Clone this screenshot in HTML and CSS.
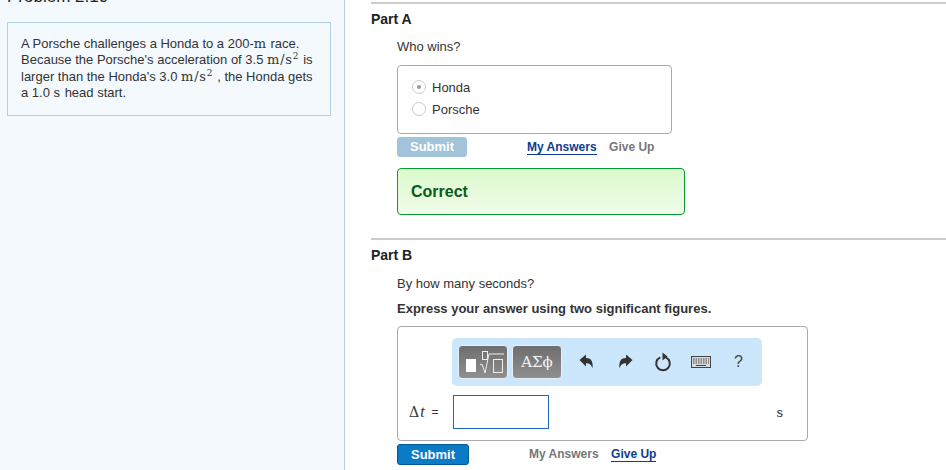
FILE: index.html
```html
<!DOCTYPE html>
<html lang="en">
<head>
<meta charset="utf-8">
<title>Problem 2.10</title>
<link rel="stylesheet" href="styles.css">
</head>
<body>
<div class="page">
  <aside class="sidebar">
    <h1 class="title">Problem 2.10</h1>
    <div class="problem">
      A Porsche challenges a Honda to a 200-<span class="m">m</span> race. Because the Porsche's acceleration of 3.5 <span class="m">m/s<sup>2</sup></span> is larger than the Honda's 3.0 <span class="m">m/s<sup>2</sup></span> , the Honda gets a 1.0 <span class="m">s</span> head start.
    </div>
  </aside>
  <main class="content">
    <section class="part part-a">
      <h2 class="part-title">Part A</h2>
      <div class="part-body">
        <p class="question">Who wins?</p>
        <div class="choices">
          <div class="choice"><span class="radio selected"></span>Honda</div>
          <div class="choice"><span class="radio"></span>Porsche</div>
        </div>
        <div class="actions actions-a">
          <button class="submit disabled">Submit</button>
          <div class="links">
            <a class="link active">My Answers</a>
            <a class="link">Give Up</a>
          </div>
        </div>
        <div class="correct">Correct</div>
      </div>
    </section>
    <section class="part part-b">
      <h2 class="part-title">Part B</h2>
      <div class="part-body">
        <p class="question">By how many seconds?</p>
        <p class="instruction">Express your answer using two significant figures.</p>
        <div class="answer-box">
          <div class="toolbar">
            <span class="tool-btn tool-templates">
              <svg width="44" height="28" viewBox="0 0 44 28">
                <rect x="5" y="11" width="10" height="13" fill="#fff"/>
                <rect x="21.500" y="3.500" width="5" height="8" fill="none" stroke="#eee"/>
                <path d="M19 17l2-1 3 9 4-19h15" fill="none" stroke="#eee"/>
                <rect x="32.500" y="11.500" width="9" height="13" fill="none" stroke="#eee"/>
              </svg>
            </span>
            <span class="tool-btn tool-symbols">ΑΣϕ</span>
            <div class="tool-icons">
              <svg class="ic" width="16" height="16" viewBox="0 0 16 16"><path d="M0.500 6 7 0.500v3.500c4.800 0 7.500 3 6.500 10.500-1-3.700-2.800-5.300-6.500-5.300v3.300z" fill="#333"/></svg>
              <svg class="ic" width="16" height="16" viewBox="0 0 16 16"><path d="M15.500 6 9 0.500v3.500c-4.800 0-7.500 3-6.500 10.500 1-3.700 2.800-5.300 6.500-5.300v3.300z" fill="#333"/></svg>
              <svg class="ic" width="18" height="20" viewBox="0 0 18 20"><path d="M6.300 5.300A6.800 6.800 0 1 0 11.700 5.300" fill="none" stroke="#333" stroke-width="2"/><path d="M8.500 0.500 13.500 4.500 8.500 8.500z" fill="#333"/></svg>
              <svg class="ic" width="20" height="12" viewBox="0 0 20 12"><rect x="0.500" y="0.500" width="19" height="11" fill="#d5dadd" stroke="#444"/><path d="M2 3h16M2 5h16M2 7h16" stroke="#444" stroke-dasharray="1.500 1"/><path d="M5 9.500h10" stroke="#444"/></svg>
              <span class="help">?</span>
            </div>
          </div>
          <div class="answer-row">
            <span class="var"><span class="delta">Δ</span><i>t</i></span>
            <span class="equals">=</span>
            <span class="input"></span>
            <span class="unit">s</span>
          </div>
        </div>
        <div class="actions actions-b">
          <button class="submit">Submit</button>
          <div class="links">
            <a class="link">My Answers</a>
            <a class="link active">Give Up</a>
          </div>
        </div>
      </div>
    </section>
  </main>
</div>
</body>
</html>
```
FILE: styles.css
```css
* { box-sizing: border-box; }
html, body { margin: 0; padding: 0; height: 470px; overflow: hidden; background: #fff; }
body { font-family: "Liberation Sans", Arial, sans-serif; font-size: 13px; color: #333; }
.page { display: flex; height: 470px; overflow: hidden; }
.sidebar { width: 345px; flex: none; background: #f4f9fe; border-right: 1px solid #b5cfe2; padding: 0 13px 0 7px; }
.title { margin: -15px 0 0; height: 37px; font-size: 17px; line-height: 24px; font-weight: normal; color: #222; }
.problem { width: 324px; height: 94px; border: 1px solid #b5cfe2; padding: 13px 13px 0; line-height: 16.4px; color: #333; }
.m { font-family: "DejaVu Serif", "Liberation Serif", serif; font-size: 13px; letter-spacing: 0.8px; }
.m sup { font-size: 9px; line-height: 0; vertical-align: 5px; letter-spacing: 0; margin-right: 1px; }
.content { flex: 1; min-width: 0; padding: 2px 0 0 26px; }
.part { border-top: 2px solid #ccc; }
.part-a { height: 236px; }
.part-title { margin: 0; font-size: 14px; line-height: 16px; font-weight: bold; color: #222; padding-top: 7px; }
.part-body { padding-left: 26px; }
.question { margin: 0; line-height: 16px; }
.part-a .question { padding-top: 12px; }
.part-b .question { padding-top: 13px; }
.choices { width: 275px; height: 69px; margin-top: 10px; border: 1px solid #aaa; border-radius: 4px; padding: 10px 14px; background: #fff; }
.choice { display: flex; align-items: center; height: 22px; }
.radio { width: 14px; height: 14px; margin-right: 6px; border-radius: 50%; border: 1px solid #ccc; background: #fff; display: flex; align-items: center; justify-content: center; }
.radio.selected::after { content: ""; width: 4px; height: 4px; border-radius: 50%; background: #999; }
.actions { display: flex; align-items: center; }
.actions-a { margin-top: 3px; }
.actions-b { margin-top: 3px; }
.submit { width: 72px; height: 21px; padding: 0; border: 1px solid #005b95; border-radius: 3px; background: #0a7bc4; color: #fff; font: bold 13px "Liberation Sans", Arial, sans-serif; }
.submit.disabled { width: 70px; height: 20px; padding-bottom: 1px; border-color: #a1c4db; background: #a1c4db; }
.links { display: flex; gap: 12.5px; font-size: 12px; font-weight: bold; color: #777; }
.actions-a .links { margin-left: 60px; }
.actions-b .links { margin-left: 60px; }
.link.active { color: #0b3d91; border-bottom: 1px solid #0b3d91; }
.correct { width: 288px; height: 47px; margin-top: 11px; border: 1px solid #0a9a32; border-radius: 4px; background: linear-gradient(#dcf9cd, #f0fce9); color: #0a5a1a; font-size: 16px; font-weight: bold; line-height: 45px; padding-left: 13px; }
.instruction { margin: 9px 0 0; font-weight: bold; line-height: 16px; }
.answer-box { width: 411px; height: 115px; margin-top: 9px; border: 1px solid #aaa; border-radius: 4px; padding: 11px 0 0 12px; background: #fff; }
.toolbar { display: flex; align-items: center; width: 310px; height: 48px; margin-left: 42px; padding-left: 6px; background: #cce6fb; border-radius: 5px; }
.tool-btn { display: flex; align-items: center; justify-content: center; height: 34px; border: 1px solid #e8eef3; border-radius: 4px; background: linear-gradient(#6e6e6e, #8f8f8f); color: #f2f2f2; }
.tool-templates { width: 50px; }
.tool-symbols { width: 50px; margin-left: 4px; font: 15px "DejaVu Serif", "Liberation Serif", serif; }
.tool-icons { display: flex; align-items: center; }
.ic { display: block; flex: none; }
.ic:nth-child(1) { margin-left: 17px; }
.ic:nth-child(2) { margin-left: 22px; }
.ic:nth-child(3) { margin-left: 21px; }
.ic:nth-child(4) { margin-left: 19px; }
.help { margin-left: 23px; font-size: 16px; color: #444; }
.answer-row { display: flex; align-items: center; height: 34px; margin-top: 9px; }
.var { font-family: "Liberation Serif", serif; font-size: 16px; letter-spacing: 1px; margin-left: -1px; }
.delta { font-family: "DejaVu Serif", serif; font-size: 14px; }
.equals { margin-left: 6px; font-size: 12px; }
.input { width: 96px; height: 34px; margin-left: 14px; border: 1px solid #1d66c0; background: #fff; }
.unit { margin-left: 228px; font: 13px "DejaVu Serif", serif; }
```
